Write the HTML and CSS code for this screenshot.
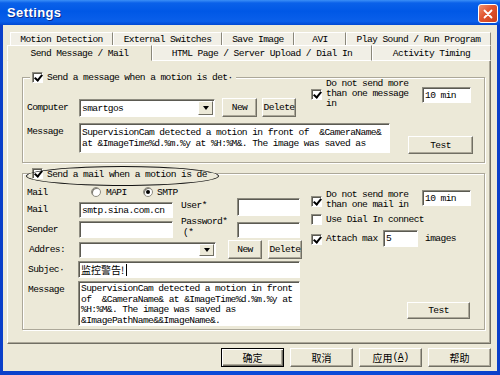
FILE: index.html
```html
<!DOCTYPE html>
<html lang="zh-CN">
<head>
    <meta charset="UTF-8">
    <title>Settings</title>
    <link rel="stylesheet" href="styles.css">
</head>
<body>
<div class="window">
    <div class="titlebar">
        <span class="title">Settings</span>
        <span class="close">
            <svg width="10" height="10" viewBox="0 0 10 10"><path d="M1.5 1.5 L8.5 8.5 M8.5 1.5 L1.5 8.5" stroke="#fff" stroke-width="1.8" stroke-linecap="round"/></svg>
        </span>
    </div>
    <div class="client">
        <div class="tabs-back">
            <span class="tab tab-motion">Motion Detection</span>
            <span class="tab tab-switch">External Switches</span>
            <span class="tab tab-save">Save Image</span>
            <span class="tab tab-avi">AVI</span>
            <span class="tab tab-sound">Play Sound / Run Program</span>
        </div>
        <div class="tabs-front">
            <span class="tab tab-send selected">Send Message / Mail</span>
            <span class="tab tab-html">HTML Page / Server Upload / Dial In</span>
            <span class="tab tab-timing">Activity Timing</span>
        </div>

        <div class="panel">
            <!-- net send -->
            <div class="group group-msg">
                <div class="legend"><span class="check on"></span><span>Send a message when a motion is det·</span></div>
                <div class="row row-computer">
                    <span class="label lbl-computer">Computer</span>
                    <span class="field combo combo-computer">smartgos<span class="drop"></span></span>
                    <span class="btn btn-new">New</span>
                    <span class="btn btn-delete">Delete</span>
                    <span class="check on chk-limit"></span>
                    <span class="check-text txt-limit">Do not send more<br>than one message<br>in</span>
                    <span class="field fld-min">10 min</span>
                </div>
                <div class="row row-message">
                    <span class="label lbl-message">Message</span>
                    <div class="memo memo-msg">SupervisionCam detected a motion in front of  &amp;CameraName&amp;
at &amp;ImageTime%d.%m.%y at %H:%M&amp;. The image was saved as</div>
                    <span class="btn btn-test">Test</span>
                </div>
            </div>

            <!-- mail -->
            <div class="group group-mail">
                <div class="oval"></div>
                <div class="legend"><span class="check on"></span><span>Send a mail when a motion is de⁻</span></div>
                <div class="group-cols">
                    <div class="col-left">
                        <div class="row row-proto">
                            <span class="label lbl-proto">Mail</span>
                            <span class="radio"></span><span class="radio-text rt-mapi">MAPI</span>
                            <span class="radio on"></span><span class="radio-text rt-smtp">SMTP</span>
                        </div>
                        <div class="row row-server">
                            <span class="label lbl-server">Mail</span>
                            <span class="field fld-server">smtp.sina.com.cn</span>
                            <span class="side-label lbl-user">User*</span>
                            <span class="field fld-user"></span>
                        </div>
                        <div class="row row-sender">
                            <span class="label lbl-sender">Sender</span>
                            <span class="field fld-sender"></span>
                            <span class="side-label lbl-pass">Password*<br><span class="indent">(*</span></span>
                            <span class="field fld-pass"></span>
                        </div>
                        <div class="row row-address">
                            <span class="label lbl-address">Addres:</span>
                            <span class="field combo combo-address"><span class="drop"></span></span>
                            <span class="btn btn-new2">New</span>
                            <span class="btn btn-delete2">Delete</span>
                        </div>
                        <div class="row row-subject">
                            <span class="label lbl-subject">Subjec·</span>
                            <span class="field fld-subject"><span class="cn">监控警告!</span><span class="caret"></span></span>
                        </div>
                        <div class="row row-body">
                            <span class="label lbl-body">Message</span>
                            <div class="memo memo-mail">SupervisionCam detected a motion in front
of  &amp;CameraName&amp; at &amp;ImageTime%d.%m.%y at
%H:%M&amp;. The image was saved as
&amp;ImagePathName&amp;&amp;ImageName&amp;.</div>
                        </div>
                    </div>
                    <div class="col-right">
                        <div class="opt opt-limit">
                            <span class="check on"></span>
                            <span class="check-text txt-limit">Do not send more<br>than one mail in</span>
                            <span class="field fld-min2">10 min</span>
                        </div>
                        <div class="opt opt-dial">
                            <span class="check"></span>
                            <span class="check-text">Use Dial In connect</span>
                        </div>
                        <div class="opt opt-attach">
                            <span class="check on"></span>
                            <span class="check-text txt-attach">Attach max</span>
                            <span class="field fld-count">5</span>
                            <span class="check-text txt-images">images</span>
                        </div>
                        <span class="btn btn-test2">Test</span>
                    </div>
                </div>
            </div>
        </div>

        <div class="footer">
            <span class="btn btn-foot default cn">确定</span>
            <span class="btn btn-foot cn">取消</span>
            <span class="btn btn-foot"><span class="cn">应用</span>(<u>A</u>)</span>
            <span class="btn btn-foot cn">帮助</span>
        </div>
    </div>
</div>
</body>
</html>
```

FILE: styles.css
```css
* {
    box-sizing: border-box;
}
body {
    margin: 0;
    width: 500px;
    height: 375px;
    overflow: hidden;
    font-family: "Liberation Mono", "DejaVu Sans Mono", monospace;
    font-size: 9.6px;
    letter-spacing: -0.6px;
    color: #000;
    background: #0b47d6;
}
.cn {
    font-family: "Noto Sans CJK SC", sans-serif;
    letter-spacing: 0;
}
.window {
    width: 500px;
    height: 375px;
    display: flex;
    flex-direction: column;
    background: linear-gradient(to right, #0a3fc9, #0b4ad8 20%, #0b4ad8 80%, #0a3fc9);
}

/* title bar */
.titlebar {
    height: 25px;
    display: flex;
    align-items: center;
    justify-content: space-between;
    padding: 0 2px 0 7px;
    background: linear-gradient(to bottom, #3b8ff7 0%, #0a61e9 12%, #0058e6 45%, #0a5fea 85%, #0049d2 100%);
}
.title {
    font-family: "Liberation Sans", sans-serif;
    font-weight: bold;
    font-size: 13px;
    letter-spacing: 0.4px;
    color: #fff;
    text-shadow: 1px 1px #0a2a8a;
}
.close {
    width: 20px;
    height: 19px;
    margin-top: 2px;
    display: flex;
    align-items: center;
    justify-content: center;
    border: 1px solid #fff;
    border-radius: 3px;
    background: linear-gradient(135deg, #f0936f, #e0542f 45%, #c9401c);
}

/* dialog body */
.client {
    flex: 1;
    margin: 0 3px 4px;
    padding-top: 7px;
    background: #ece9d8;
    display: flex;
    flex-direction: column;
}
.tabs-back, .tabs-front {
    display: flex;
}
.tabs-back {
    margin-left: 7px;
    height: 13px;
}
.tabs-front {
    margin-left: 4px;
    height: 16px;
    margin-bottom: -1px;
    position: relative;
    z-index: 1;
}
.tab {
    display: flex;
    align-items: center;
    justify-content: center;
    white-space: nowrap;
    background: #f1efe6;
    border: 1px solid;
    border-color: #fff #8a877a transparent #fff;
    border-bottom: none;
}
.tabs-front .tab {
    border-bottom: 1px solid #fff;
}
.tabs-front .tab.selected {
    border-bottom: 1px solid #ece9d8;
    background: #ece9d8;
}
.tab-motion { width: 103px; }
.tab-switch { width: 109px; }
.tab-save { width: 72px; }
.tab-avi { width: 52px; }
.tab-sound { width: 145px; }
.tab-send { width: 145px; }
.tab-html { width: 220px; }
.tab-timing { width: 119px; }

.panel {
    margin-left: 4px;
    width: 484px;
    height: 284px;
    padding: 16px 0 0 14px;
    border: 1px solid;
    border-color: #fff #716f64 #716f64 #fff;
    box-shadow: inset -1px -1px #aca899;
}

/* group boxes */
.group {
    position: relative;
    width: 463px;
    display: flex;
    flex-direction: column;
    border: 1px solid #aca899;
    box-shadow: inset 1px 1px #fff, 1px 1px #fff;
}
.group-msg { height: 86px; }
.group-mail { height: 157px; margin-top: 10px; }
.legend {
    align-self: flex-start;
    display: flex;
    align-items: center;
    gap: 4px;
    height: 11px;
    margin: -6px 0 -5px 7px;
    padding: 0 3px 0 2px;
    background: #ece9d8;
    white-space: nowrap;
}
.oval {
    position: absolute;
    left: 3px;
    top: -8px;
    width: 193px;
    height: 20px;
    border: 1.5px solid #111;
    border-radius: 50%;
}

.row {
    display: flex;
    align-items: flex-start;
    white-space: nowrap;
}
.label, .side-label, .check-text, .radio-text {
    white-space: nowrap;
}

/* controls */
.field {
    display: flex;
    align-items: center;
    padding-left: 2px;
    background: #fff;
    border: 1px solid;
    border-color: #8e8c80 #fff #fff #8e8c80;
    box-shadow: inset 1px 1px #5b5a52;
    white-space: nowrap;
}
.combo {
    padding-right: 1px;
}
.drop {
    width: 15px;
    height: calc(100% - 2px);
    margin-left: auto;
    display: flex;
    align-items: center;
    justify-content: center;
    background: #ece9d8;
    border: 1px solid;
    border-color: #fff #716f64 #716f64 #fff;
}
.drop::after {
    content: "";
    border-left: 3.5px solid transparent;
    border-right: 3.5px solid transparent;
    border-top: 4px solid #000;
}
.btn {
    display: flex;
    align-items: center;
    justify-content: center;
    background: #ece9d8;
    border: 1px solid;
    border-color: #fff #716f64 #716f64 #fff;
    box-shadow: inset -1px -1px #aca899;
    white-space: nowrap;
}
.check {
    width: 11px;
    height: 11px;
    flex: none;
    display: flex;
    align-items: center;
    justify-content: center;
    background: #fff;
    border: 1px solid;
    border-color: #8e8c80 #fff #fff #8e8c80;
    box-shadow: inset 1px 1px #5b5a52;
}
.check.on::after {
    content: "";
    width: 3px;
    height: 6px;
    margin: -2px 0 0 1px;
    border: solid #000;
    border-width: 0 2px 2px 0;
    transform: rotate(40deg);
}
.radio {
    width: 10px;
    height: 10px;
    flex: none;
    display: flex;
    align-items: center;
    justify-content: center;
    border-radius: 50%;
    background: #fff;
    border: 1px solid #8e8c80;
    box-shadow: inset 1px 1px #7a786e;
}
.radio.on::after {
    content: "";
    width: 4px;
    height: 4px;
    border-radius: 50%;
    background: #000;
}
.memo {
    padding: 2px 0 0 2px;
    line-height: 10.6px;
    white-space: pre;
    overflow: hidden;
    background: #fff;
    border: 1px solid;
    border-color: #8e8c80 #fff #fff #8e8c80;
    box-shadow: inset 1px 1px #5b5a52;
}

/* message group */
.row-computer {
    height: 39px;
}
.lbl-computer {
    margin: 21px 0 0 4px;
    width: 52px;
    line-height: 18px;
}
.combo-computer {
    margin-top: 21px;
    width: 136px;
    height: 18px;
}
.btn-new {
    margin: 20px 0 0 7px;
    width: 35px;
    height: 19px;
}
.btn-delete {
    margin: 20px 0 0 5px;
    width: 34px;
    height: 19px;
}
.chk-limit {
    margin: 11px 0 0 15px;
}
.txt-limit {
    margin: 1px 0 0 4px;
    width: 96px;
    line-height: 10px;
}
.fld-min {
    margin-top: 9px;
    width: 49px;
    height: 16px;
}
.row-message {
    margin-top: 6px;
}
.lbl-message {
    margin-left: 4px;
    width: 52px;
    line-height: 18px;
}
.memo-msg {
    width: 311px;
    height: 30px;
    padding-top: 4px;
}
.btn-test {
    margin: 13px 0 0 18px;
    width: 65px;
    height: 18px;
}

/* mail group */
.group-cols {
    display: flex;
}
.col-left {
    width: 279px;
    display: flex;
    flex-direction: column;
}
.col-right {
    margin-left: 9px;
    display: flex;
    flex-direction: column;
    align-items: flex-start;
}
.row-proto {
    margin-top: 12px;
    height: 12px;
    align-items: center;
}
.lbl-proto {
    margin-left: 4px;
    width: 64px;
}
.rt-mapi {
    margin-left: 5px;
    width: 37px;
}
.rt-smtp {
    margin-left: 4px;
}
.row-server {
    height: 20px;
}
.lbl-server {
    margin: 4px 0 0 4px;
    width: 52px;
    line-height: 16px;
}
.fld-server {
    margin-top: 4px;
    width: 94px;
    height: 16px;
}
.side-label {
    margin-left: 8px;
    width: 56px;
}
.lbl-user {
    margin-top: 2px;
    line-height: 12px;
}
.fld-user {
    width: 63px;
    height: 18px;
}
.row-sender {
    margin-top: 3px;
    height: 17px;
}
.lbl-sender {
    margin-left: 4px;
    width: 52px;
    line-height: 17px;
}
.fld-sender {
    width: 94px;
    height: 17px;
}
.lbl-pass {
    margin-top: -5px;
    line-height: 11px;
}
.indent {
    margin-left: 2px;
}
.fld-pass {
    margin-top: 1px;
    width: 63px;
    height: 16px;
}
.row-address {
    margin-top: 2px;
    height: 19px;
}
.lbl-address {
    margin-left: 6px;
    width: 50px;
    line-height: 19px;
}
.combo-address {
    margin-top: 2px;
    width: 137px;
    height: 16px;
}
.btn-new2 {
    margin-left: 12px;
    width: 34px;
    height: 19px;
}
.btn-delete2 {
    margin-left: 6px;
    width: 34px;
    height: 19px;
}
.row-subject {
    margin-top: 2px;
}
.lbl-subject, .lbl-body {
    margin-left: 5px;
    width: 50px;
}
.lbl-subject {
    line-height: 17px;
}
.fld-subject {
    width: 222px;
    height: 17px;
    font-size: 10px;
}
.caret {
    width: 1px;
    height: 12px;
    margin-left: 2px;
    background: #000;
}
.row-body {
    margin-top: 3px;
}
.lbl-body {
    line-height: 18px;
}
.memo-mail {
    width: 222px;
    height: 45px;
}

.opt {
    display: flex;
    align-items: flex-start;
}
.opt-limit {
    margin-top: 15px;
}
.opt-limit .check {
    margin-top: 7px;
}
.fld-min2 {
    margin-top: 1px;
    width: 49px;
    height: 16px;
}
.opt-dial {
    margin-top: 4px;
}
.opt-dial .check-text {
    margin-left: 4px;
    line-height: 11px;
}
.opt-attach {
    margin-top: 5px;
}
.opt-attach .check {
    margin-top: 4px;
}
.txt-attach {
    margin-left: 4px;
    width: 57px;
    line-height: 17px;
}
.fld-count {
    width: 35px;
    height: 17px;
}
.txt-images {
    margin-left: 7px;
    line-height: 17px;
}
.btn-test2 {
    margin: 55px 0 0 96px;
    width: 63px;
    height: 17px;
}

/* bottom buttons */
.footer {
    display: flex;
    justify-content: flex-end;
    gap: 6px;
    margin: 4px 6px 0 0;
}
.btn-foot {
    width: 63px;
    height: 19px;
    font-size: 10px;
}
.btn-foot.default {
    border: 1px solid #000;
    box-shadow: inset 1px 1px #fff, inset -1px -1px #716f64, inset -2px -2px #aca899;
}
```
